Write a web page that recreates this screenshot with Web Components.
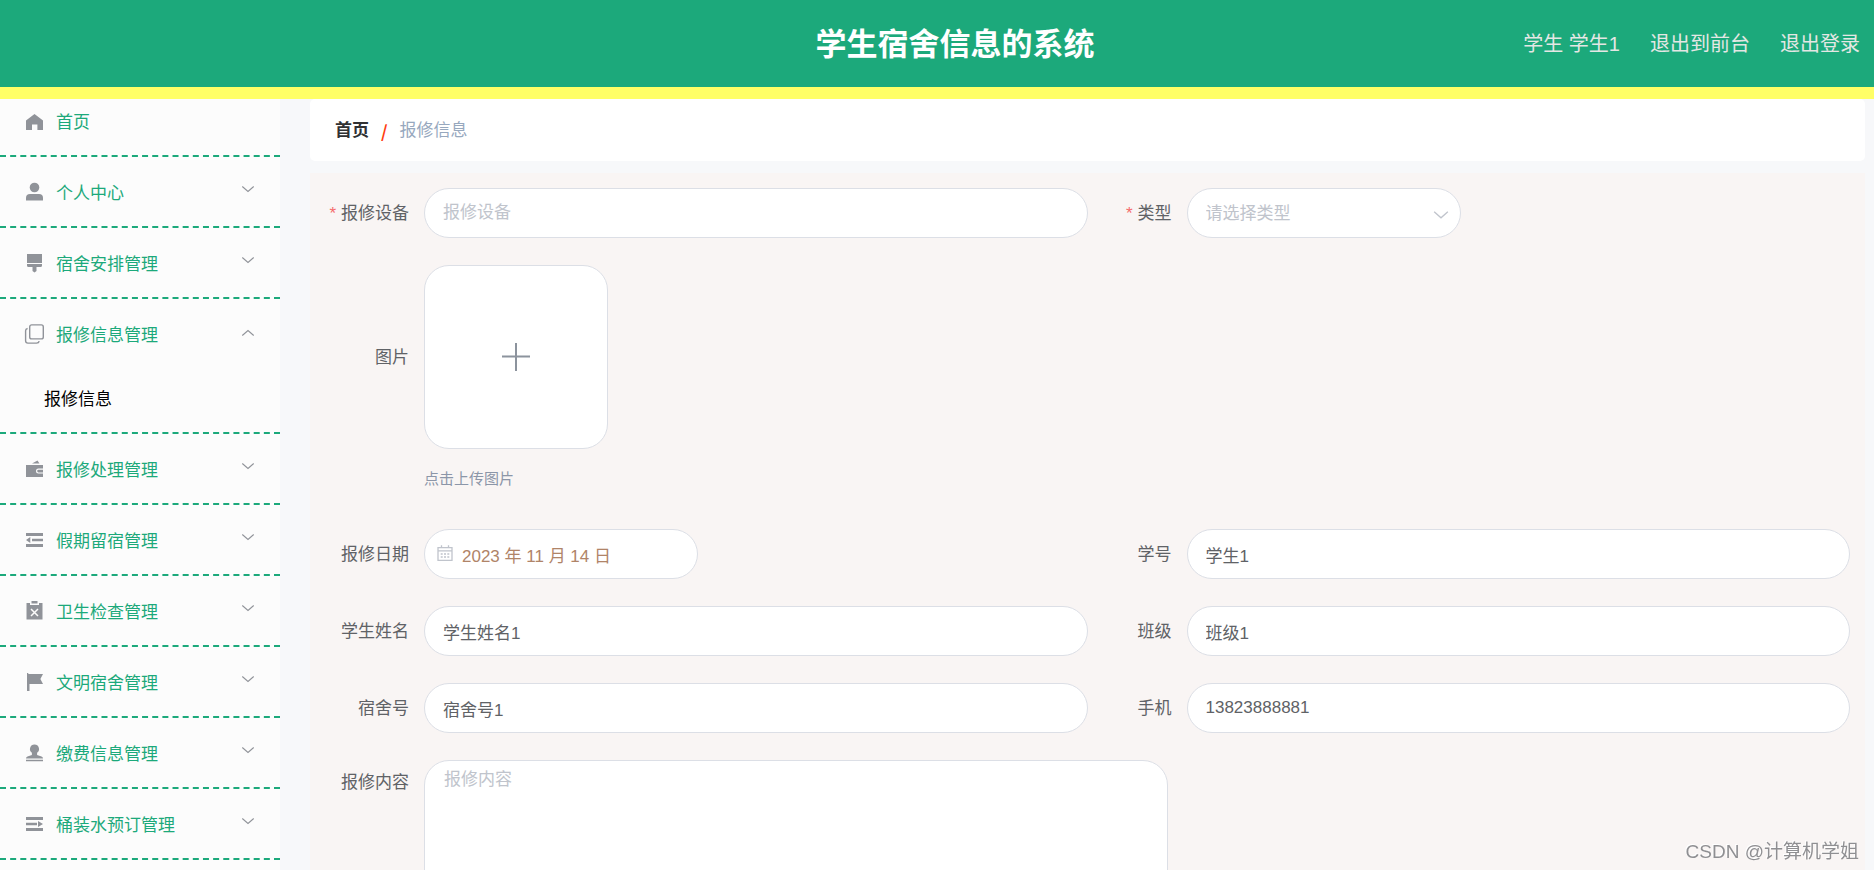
<!DOCTYPE html>
<html lang="zh-CN">
<head>
<meta charset="utf-8">
<meta name="viewport" content="width=device-width, initial-scale=1">
<title>学生宿舍信息的系统</title>
<style>
  html, body { margin: 0; height: 100%; }
  body {
    --brand: #1ca97b;
    --line: #dcdfe6;
    --text: #606266;
    font: 17px/24px "Liberation Sans", "Noto Sans CJK SC", sans-serif;
    color: var(--text);
    overflow: hidden;
  }
</style>
</head>
<body>
<app-shell>
  <app-header slot="header" heading="学生宿舍信息的系统">
    <span>学生 学生1</span>
    <a href="#front">退出到前台</a>
    <a href="#logout">退出登录</a>
  </app-header>
  <side-menu slot="aside">
    <menu-entry class="first" icon="home" href="#home" label="首页"></menu-entry>
    <menu-entry icon="user" label="个人中心"></menu-entry>
    <menu-entry icon="brush" label="宿舍安排管理"></menu-entry>
    <menu-entry icon="copy" label="报修信息管理" open><a href="#repair">报修信息</a></menu-entry>
    <menu-entry icon="wallet" label="报修处理管理"></menu-entry>
    <menu-entry icon="fold" label="假期留宿管理"></menu-entry>
    <menu-entry icon="release" label="卫生检查管理"></menu-entry>
    <menu-entry icon="flag" label="文明宿舍管理"></menu-entry>
    <menu-entry icon="stamp" label="缴费信息管理"></menu-entry>
    <menu-entry icon="unfold" label="桶装水预订管理"></menu-entry>
  </side-menu>
  <bread-crumb current="报修信息"></bread-crumb>
  <repair-form>
    <form-field label="报修设备" placeholder="报修设备" required></form-field>
    <form-field label="类型" kind="select" placeholder="请选择类型" required></form-field>
    <upload-field class="wide" label="图片" tip="点击上传图片"></upload-field>
    <form-field label="报修日期" kind="date" value="2023 年 11 月 14 日"></form-field>
    <form-field label="学号" value="学生1"></form-field>
    <form-field label="学生姓名" value="学生姓名1"></form-field>
    <form-field label="班级" value="班级1"></form-field>
    <form-field label="宿舍号" value="宿舍号1"></form-field>
    <form-field label="手机" value="13823888881"></form-field>
    <form-field class="wide" label="报修内容" kind="textarea" placeholder="报修内容"></form-field>
  </repair-form>
  <water-mark slot="mark">CSDN @计算机学姐</water-mark>
</app-shell>

<script>
const ICONS = {
  home: '<path fill="currentColor" d="M10.5 2 19 8.6V18h-5.6v-5.5H8V18H2V8.600z"/>',
  user: '<circle cx="10.500" cy="5.500" r="4.800" fill="currentColor"/><path fill="currentColor" d="M2 18.500v-2.500q0-4 4-4h9q4 0 4 4v2.500z"/>',
  brush: '<path fill="currentColor" d="M3 1h15v9H3zM3 11h15v1.500q0 1.500-1.500 1.500H12.500v4L10.500 19.500 8.500 18v-4H4.500Q3 14 3 12.500z"/>',
  copy: '<g fill="none" stroke="currentColor" stroke-width="1.400"><rect x="5.700" y=".9" width="13.600" height="14" rx="2"/><path d="M3.600 4.500q-2 .3-2 2.300v10q0 2.300 2.300 2.300h8.600q2.300 0 2.700-2"/></g>',
  wallet: '<path fill="currentColor" d="M8 4.500 13.500 1.500 15.500 4.500zM2 6h17v3.500h-4.500a2.500 2.500 0 0 0 0 5H19V18H2z"/><path fill="currentColor" d="M14.500 10.800H19v2.600h-4.500a1.300 1.300 0 0 1 0-2.600z"/>',
  fold: '<path fill="currentColor" d="M2 3h17v3H2zM8 8.700h11v2.600H8zM2 14h17v3H2zM2 10l4.300-3v6z"/>',
  release: '<path fill="currentColor" d="M7.500 0h6v2.500h-6z"/><path fill="currentColor" fill-rule="evenodd" d="M2.500 2H6v2h9V2h3.500v16.500h-16z"/><path fill="none" stroke="#fcfcfc" stroke-width="1.500" d="m7 8 7 7M14 8l-7 7"/>',
  flag: '<path fill="currentColor" d="M3 1h1.300v1H19l-2.600 5L19 12H5.500v7H3z"/>',
  stamp: '<path fill="currentColor" d="M10.500 1.500a4.500 4.500 0 0 0-2.600 8.200V12L3.500 13.500Q2 14 2 15.500h17q0-1.500-1.500-2L13.100 12V9.700a4.500 4.500 0 0 0-2.600-8.200zM2 16.700h17v1.600H2z"/>',
  unfold: '<path fill="currentColor" d="M2 3h17v3H2zM2 8.700h11v2.600H2zM2 14h17v3H2zM19 10l-5-3v6z"/>',
  arrow: '<path fill="none" stroke="currentColor" stroke-width="1.100" d="m4.300 6.500 5.700 5 5.700-5"/>',
  calendar: '<g fill="none" stroke="currentColor" stroke-width="1.300"><path d="M3 4.600h14v12.700H3zM3 7.800h14M6.500 2.300v3M13.500 2.300v3"/><path stroke-dasharray="2 1.300" d="M5.700 11h9M5.700 14h9"/></g>'
};
const svg = (name, size = 20) =>
  `<svg viewBox="0 0 20 20" width="${size}" height="${size}" aria-hidden="true">${ICONS[name]}</svg>`;

class Base extends HTMLElement {
  connectedCallback() {
    if (this.shadowRoot) return;
    this.attachShadow({ mode: 'open' }).innerHTML = this.render();
    this.ready();
  }
  ready() {}
  attr(name) { return this.getAttribute(name) || ''; }
}

customElements.define('app-shell', class extends Base {
  render() { return `<style>
    :host { display: flex; flex-direction: column; height: 100vh; background: #f7f8fa; }
    .body { flex: 1; min-height: 0; display: flex; }
    aside { flex: none; width: 280px; overflow: hidden; background: #fcfcfc; }
    main { flex: 1; min-width: 0; overflow: hidden; padding: 0 9px 0 30px; }
  </style>
  <slot name="header"></slot>
  <div class="body"><aside><slot name="aside"></slot></aside><main><slot></slot></main></div>
  <slot name="mark"></slot>`; }
});

customElements.define('app-header', class extends Base {
  render() { return `<style>
    :host { display: block; flex: none; background: var(--brand); border-bottom: 12px solid #ffff66; }
    header { display: grid; grid-template-columns: 1fr auto 1fr; align-items: center; height: 87px; padding: 0 14px 0 50px; }
    h1 { grid-column: 2; margin: 0; padding-top: 3px; font-size: 31px; line-height: 40px; color: #fff; }
    nav { display: flex; justify-content: flex-end; gap: 30px; font-size: 20px; color: #e4e7e4; }
    ::slotted(a) { color: inherit; text-decoration: none; }
  </style>
  <header><h1>${this.attr('heading')}</h1><nav><slot></slot></nav></header>`; }
});

customElements.define('side-menu', class extends Base {
  render() { return `<style>
    :host, nav { display: block; }
  </style><nav><slot></slot></nav>`; }
});

customElements.define('menu-entry', class extends Base {
  render() {
    const link = this.hasAttribute('href');
    const tag = link ? 'a' : 'button';
    const open = this.hasAttribute('open');
    const extra = link ? `href="${this.attr('href')}"` : `type="button" aria-expanded="${open}"`;
    return `<style>
    :host { display: block; border-bottom: 2px dashed var(--brand); }
    .row { box-sizing: border-box; display: flex; align-items: center; gap: 12px; width: 100%; height: 69px;
      margin: 0; padding: 4px 22px 0 24px; border: 0; background: none; font: inherit; color: var(--brand);
      text-align: left; text-decoration: none; cursor: pointer; }
    :host(.first) .row { height: 56px; padding: 0 22px 8px 24px; }
    svg { flex: none; color: #909399; }
    .row > svg { margin-bottom: 3px; }
    .label { flex: 1; }
    .arrow { display: flex; align-self: flex-start; margin-top: 19px; }
    :host([open]) .arrow { transform: rotate(180deg); }
    .sub { display: none; height: 64px; padding-left: 44px; }
    :host([open]) .sub { display: flex; align-items: center; }
    ::slotted(a) { color: #000; text-decoration: none; }
  </style>
  <${tag} class="row" ${extra}>${svg(this.attr('icon'))}<span class="label">${this.attr('label')}</span>
  ${link ? '' : `<span class="arrow">${svg('arrow')}</span>`}</${tag}>
  <div class="sub"><slot></slot></div>`;
  }
  ready() {
    const row = this.shadowRoot.querySelector('button');
    if (row) row.addEventListener('click', () => {
      row.setAttribute('aria-expanded', this.toggleAttribute('open'));
    });
  }
});

customElements.define('bread-crumb', class extends Base {
  render() { return `<style>
    :host { display: block; }
    nav { display: flex; align-items: center; gap: 12px; height: 60px; padding: 2px 25px 0; background: #fff; border-radius: 5px; }
    a { color: #303133; font-weight: 700; text-decoration: none; }
    i { color: #ff3c10; font: 700 17px/24px "Noto Sans CJK SC", sans-serif; }
    span { color: #97a8be; }
  </style><nav aria-label="位置"><a href="#home">首页</a><i>/</i><span>${this.attr('current')}</span></nav>`; }
});

customElements.define('repair-form', class extends Base {
  render() { return `<style>
    :host { display: block; margin-top: 12px; padding: 15px; background: #f9f5f4; }
    form { display: grid; grid-template-columns: 1fr 1fr; row-gap: 27px; }
    ::slotted(.wide) { grid-column: 1 / -1; }
  </style><form><slot></slot></form>`; }
});

const FIELD_CSS = `
  :host { display: flex; align-items: flex-start; }
  label, .label { box-sizing: border-box; flex: none; width: 99px; padding-right: 15px; text-align: right; line-height: 52px; margin-bottom: -2px; white-space: nowrap; }
  .star { color: #f56c6c; margin-right: 5px; }`;

customElements.define('form-field', class extends Base {
  render() {
    const ph = this.attr('placeholder'), value = this.attr('value');
    const kind = this.attr('kind') || 'text';
    const controls = {
      text: () => `<input id="c" type="text" value="${value}" placeholder="${ph}">`,
      date: () => `${svg('calendar')}<input id="c" type="text" value="${value}">`,
      select: () => `<select id="c"><option value="">${ph}</option></select>${svg('arrow', 24)}`,
      textarea: () => `<textarea id="c" placeholder="${ph}"></textarea>`
    };
    return `<style>${FIELD_CSS}
    :host([kind="textarea"]) label { line-height: 46px; }
    .box { position: relative; flex: 1; min-width: 0; }
    .select, .date { flex: none; width: 274px; }
    .textarea { flex: none; width: 744px; }
    input, select, textarea { display: block; box-sizing: border-box; width: 100%; height: 50px; margin: 0; padding: 0 18px;
      border: 1px solid var(--line); border-radius: 25px; background: #fff; font: inherit; color: var(--text); outline: none; appearance: none; }
    ::placeholder { color: #c0c4cc; opacity: 1; }
    select { padding-top: 2px; color: #c0c4cc; }
    textarea { height: 200px; padding: 7px 19px; resize: none; }
    .date input { padding-left: 37px; color: #b08468; }
    svg { position: absolute; top: 14px; color: #c0c4cc; pointer-events: none; }
    .date svg { left: 11px; }
    .select svg { top: 16px; right: 8px; }
  </style>
  <label for="c">${this.hasAttribute('required') ? '<span class="star">*</span>' : ''}${this.attr('label')}</label>
  <div class="box ${kind}">${controls[kind]()}</div>`;
  }
});

customElements.define('upload-field', class extends Base {
  render() { return `<style>${FIELD_CSS}
    .label { line-height: 186px; }
    button { display: flex; align-items: center; justify-content: center; box-sizing: border-box; width: 184px; height: 184px;
      padding: 0; border: 1px solid var(--line); border-radius: 25px; background: #fff; color: #8c939d; cursor: pointer; }
    p { margin: 0; padding: 18px 0 11px; font-size: 15px; line-height: 24px; color: #8c96a8; }
  </style>
  <span class="label">${this.attr('label')}</span>
  <div><button type="button" aria-label="${this.attr('tip')}"><svg viewBox="0 0 30 30" width="30" height="30" aria-hidden="true"><path d="M1 14.500h28M15 1v28" stroke="currentColor" stroke-width="2" fill="none"/></svg></button>
  <p>${this.attr('tip')}</p></div>`; }
});

customElements.define('water-mark', class extends Base {
  render() { return `<style>
    :host { position: fixed; right: 15px; bottom: 6px; font-size: 19px; color: #8f8f92; text-shadow: -1px -1px 0 #fff; pointer-events: none; }
  </style><slot></slot>`; }
});
</script>
</body>
</html>
